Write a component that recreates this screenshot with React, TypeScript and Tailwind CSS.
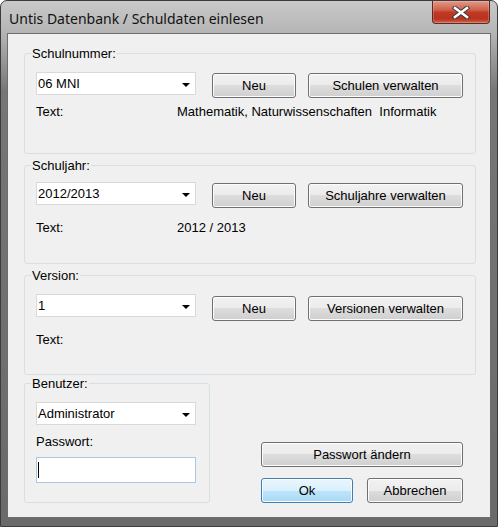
import React from 'react';
import clsx from 'clsx';

// Windows 7 style dialog: "Untis Datenbank / Schuldaten einlesen"

const Combo = ({ value }: { value: string }) => (
  <div className="w-[160px] h-[23px] bg-white border border-[#d9d9d9] flex items-center justify-between pl-[1px] pr-[5px]">
    <span>{value}</span>
    <svg width="8" height="4" viewBox="0 0 8 4" className="mt-[2px]">
      <polygon points="0,0 8,0 4,4" fill="#000" />
    </svg>
  </div>
);

const Btn = ({
  children,
  className,
  primary,
}: {
  children: React.ReactNode;
  className?: string;
  primary?: boolean;
}) => (
  <div
    className={clsx(
      'h-[25px] rounded-[3px] border flex items-center justify-center shadow-[inset_0_0_0_1px_#fcfcfc]',
      primary
        ? 'border-[#3c7fb1] bg-[linear-gradient(#eaf6fd_0%,#d9f0fc_50%,#bee6fd_50%,#a7d9f5_100%)]'
        : 'border-[#707070] bg-[linear-gradient(#f2f2f2_0%,#ebebeb_50%,#dddddd_50%,#cfcfcf_100%)]',
      className
    )}
  >
    {children}
  </div>
);

const CloseButton = () => (
  <div className="w-[58px] h-[23px] rounded-b-[4px] border border-t-0 border-[#5b2a22] bg-[linear-gradient(#e3998a_0%,#d0614b_40%,#c13925_52%,#b9321f_82%,#cf6a4d_100%)] flex items-center justify-center shadow-[inset_0_0_0_1px_rgba(255,255,255,0.2)]">
    <svg width="18" height="13" viewBox="0 0 18 13">
      <g strokeLinecap="square">
        <line x1="3" y1="2" x2="15" y2="11" stroke="#3a3a3a" strokeWidth="4.5" />
        <line x1="15" y1="2" x2="3" y2="11" stroke="#3a3a3a" strokeWidth="4.5" />
        <line x1="3" y1="2" x2="15" y2="11" stroke="#fff" strokeWidth="2.6" />
        <line x1="15" y1="2" x2="3" y2="11" stroke="#fff" strokeWidth="2.6" />
      </g>
    </svg>
  </div>
);

const TextRow = ({ value, className }: { value?: string; className?: string }) => (
  <div className={clsx('flex', className)}>
    <span className="w-[141px]">Text:</span>
    <span className="whitespace-pre">{value}</span>
  </div>
);

export default function App() {
  return (
    <div className="w-[498px] h-[527px] rounded-t-[7px] border border-[#3c3c3c] flex flex-col bg-[linear-gradient(180deg,#c9c9c9_0px,#b4b4b4_33px,#767676_90px,#6a6a6a_100%)] font-['Liberation_Sans',Arial,sans-serif] text-[13px] leading-[15px] text-black">
      {/* Title bar */}
      <div className="h-[32px] flex items-start justify-between pl-[8px] pr-[7px]">
        <div className="mt-[8px] font-['Noto_Sans',sans-serif] text-[14px] leading-[20px] text-[#111]">
          Untis Datenbank / Schuldaten einlesen
        </div>
        <CloseButton />
      </div>

      {/* Client area */}
      <div className="flex-1 mx-[6px] mb-[8px] bg-[#f0f0f0] border border-[#6d6d6d] pl-[16px] pr-[14px] flex flex-col">
        {/* Schulnummer */}
        <fieldset className="mt-[12px] border border-[#d5dfe5] rounded-[3px]">
          <legend className="ml-[6px] px-[1px]">Schulnummer:</legend>
          <div className="pl-[11px] pt-[11px] pb-[34px]">
            <div className="flex items-start">
              <Combo value="06 MNI" />
              <Btn className="ml-[16px] mt-[1px] w-[84px]">Neu</Btn>
              <Btn className="ml-[12px] mt-[1px] w-[155px]">Schulen verwalten</Btn>
            </div>
            <TextRow className="mt-[6px]" value={'Mathematik, Naturwissenschaften  Informatik'} />
          </div>
        </fieldset>

        {/* Schuljahr */}
        <fieldset className="mt-[4px] border border-[#d5dfe5] rounded-[3px]">
          <legend className="ml-[6px] px-[1px]">Schuljahr:</legend>
          <div className="pl-[11px] pt-[9px] pb-[28px]">
            <div className="flex items-start">
              <Combo value="2012/2013" />
              <Btn className="ml-[16px] mt-[1px] w-[84px]">Neu</Btn>
              <Btn className="ml-[12px] mt-[1px] w-[155px]">Schuljahre verwalten</Btn>
            </div>
            <TextRow className="mt-[12px]" value="2012 / 2013" />
          </div>
        </fieldset>

        {/* Version */}
        <fieldset className="mt-[4px] border border-[#d5dfe5] rounded-[3px]">
          <legend className="ml-[6px] px-[1px]">Version:</legend>
          <div className="pl-[11px] pt-[11px] pb-[27px]">
            <div className="flex items-start">
              <Combo value="1" />
              <Btn className="ml-[16px] mt-[2px] w-[84px]">Neu</Btn>
              <Btn className="ml-[12px] mt-[2px] w-[155px]">Versionen verwalten</Btn>
            </div>
            <TextRow className="mt-[11px]" />
          </div>
        </fieldset>

        {/* Benutzer + buttons */}
        <div className="mt-[1px] flex items-end">
          <fieldset className="w-[186px] border border-[#d5dfe5] rounded-[3px]">
            <legend className="ml-[6px] px-[1px]">Benutzer:</legend>
            <div className="pl-[11px] pt-[11px] pb-[19px]">
              <Combo value="Administrator" />
              <div className="mt-[9px]">Passwort:</div>
              <div className="mt-[8px] w-[160px] h-[26px] bg-white border border-[#a9c8e8] flex items-center pl-[1px]">
                <div className="w-px h-[16px] bg-black" />
              </div>
            </div>
          </fieldset>

          <div className="ml-[51px] w-[202px] flex flex-col gap-[11px]">
            <Btn className="w-full">Passwort ändern</Btn>
            <div className="flex justify-between">
              <Btn primary className="w-[92px]">Ok</Btn>
              <Btn className="w-[96px]">Abbrechen</Btn>
            </div>
          </div>
        </div>
      </div>
    </div>
  );
}
